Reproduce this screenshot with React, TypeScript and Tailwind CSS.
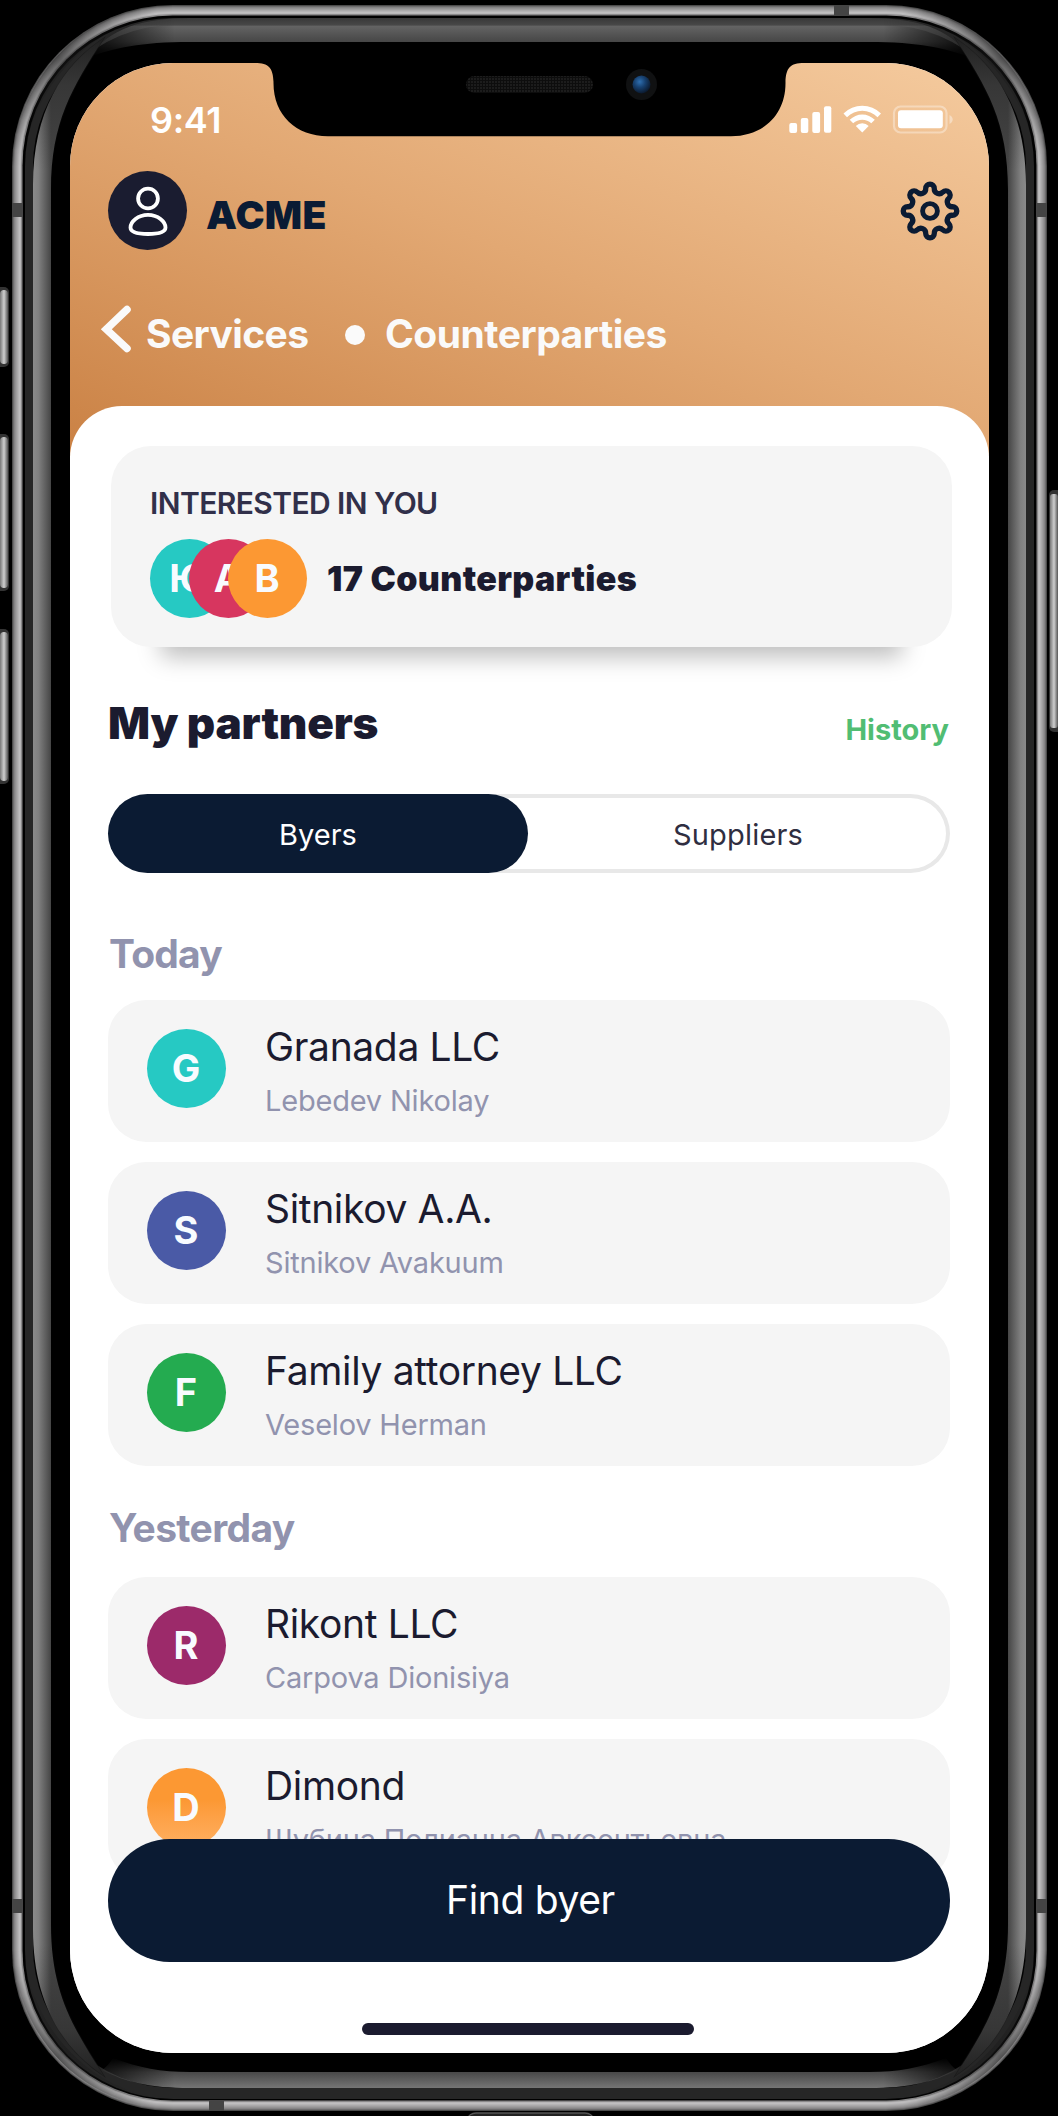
type Partner = { letter: string; color: string; name: string; person: string };

const today: Partner[] = [
  { letter: "G", color: "bg-[#26c9c3]", name: "Granada LLC", person: "Lebedev Nikolay" },
  { letter: "S", color: "bg-[#4a5aa6]", name: "Sitnikov A.A.", person: "Sitnikov Avakuum" },
  { letter: "F", color: "bg-[#24ab50]", name: "Family attorney LLC", person: "Veselov Herman" },
];

const yesterday: Partner[] = [
  { letter: "R", color: "bg-[#9c2a6a]", name: "Rikont LLC", person: "Carpova Dionisiya" },
  { letter: "D", color: "bg-linear-to-b from-[#fc9833] from-40% to-[#ffb060]", name: "Dimond", person: "Шубина Полианна Авксентьевна" },
];

// Metal edge: concentric strokes from the outer rim inwards.
const rim = ["#4c4c4c", "#6e6d6e", "#858485", "#939293", "#9f9e9f", "#aaa9aa", "#b5b4b5", "#bfbebf", "#b8b7b8", "#8a898a"];

function SideBand({ transform }: { transform?: string }) {
  return (
    <g transform={transform}>
      <path d="M33 1059 V185 C33 112 62 66 104 38 C72 88 51 122 51 190 V1059 Z" fill="url(#side)" />
      <path d="M32 190 V185 C32 112 61 65 106 36 C73 88 52 122 52 190 Z" fill="url(#tip)" />
      <path d="M12 175 C13 80 80 8 172 5 L172 16 C95 18 27 85 22 175 Z" fill="url(#cornerShade)" />
    </g>
  );
}

function Device() {
  return (
    <svg className="absolute inset-0" width="1058" height="2116" viewBox="0 0 1058 2116" fill="none">
      <defs>
        <linearGradient id="side" gradientUnits="userSpaceOnUse" x1="33" y1="0" x2="51" y2="0">
          <stop stopColor="#8a8a8a" /><stop offset=".3" stopColor="#808080" /><stop offset="1" stopColor="#454545" />
        </linearGradient>
        <linearGradient id="tip" gradientUnits="userSpaceOnUse" x1="0" y1="38" x2="0" y2="170">
          <stop stopColor="#151515" stopOpacity=".75" /><stop offset=".35" stopColor="#151515" stopOpacity=".3" /><stop offset="1" stopColor="#151515" stopOpacity="0" />
        </linearGradient>
        <linearGradient id="top" gradientUnits="userSpaceOnUse" x1="0" y1="18" x2="0" y2="58">
          <stop stopColor="#383838" /><stop offset=".18" stopColor="#484848" /><stop offset=".2" stopColor="#646464" /><stop offset=".6" stopColor="#464646" /><stop offset="1" stopColor="#000" />
        </linearGradient>
        <linearGradient id="bottom" gradientUnits="userSpaceOnUse" x1="0" y1="2058" x2="0" y2="2088">
          <stop stopColor="#000" /><stop offset=".47" stopColor="#484848" /><stop offset="1" stopColor="#757575" />
        </linearGradient>
        <linearGradient id="ends" gradientUnits="userSpaceOnUse" x1="86" y1="0" x2="972" y2="0">
          <stop stopColor="#222" /><stop offset=".1" stopColor="#fff" /><stop offset=".9" stopColor="#fff" /><stop offset="1" stopColor="#222" />
        </linearGradient>
        <mask id="bandEnds" maskUnits="userSpaceOnUse" x="0" y="0" width="1058" height="2116">
          <rect width="1058" height="2116" fill="url(#ends)" />
        </mask>
        <linearGradient id="cornerShade" gradientUnits="userSpaceOnUse" x1="12" y1="150" x2="150" y2="8">
          <stop stopColor="#1c1c1c" stopOpacity="0" /><stop offset=".5" stopColor="#1c1c1c" stopOpacity=".55" /><stop offset="1" stopColor="#1c1c1c" stopOpacity="0" />
        </linearGradient>
        <linearGradient id="key" x1="0" y1="0" x2="1" y2="0">
          <stop stopColor="#777" /><stop offset=".5" stopColor="#cfcfcf" /><stop offset="1" stopColor="#555" />
        </linearGradient>
      </defs>
      <rect width="1058" height="2116" fill="#000" />
      {[[287, 80], [434, 157], [629, 155]].map(([y, h]) => (
        <g key={y}>
          <rect x="-6" y={y} width="15" height={h} rx="5" fill="#333" />
          <rect x="0" y={y + 3} width="8" height={h - 6} rx="4" fill="url(#key)" />
        </g>
      ))}
      <rect x="1049" y="490" width="14" height="242" rx="5" fill="#333" />
      <rect x="1050" y="494" width="8" height="234" rx="3" fill="url(#key)" />
      {rim.map((c, i) => (
        <rect key={i} x={12 + i} y={5 + i} width={1035 - 2 * i} height={2106 - 2 * i} rx={161 - i} fill={c} />
      ))}
      <rect x="22.500" y="15.500" width="1014" height="2085" rx="150" fill="#000" />
      <rect x="25" y="18" width="1009" height="2081" rx="148" fill="#262626" />
      <rect x="33" y="25" width="993" height="2063" rx="141" fill="#000" />
      <g mask="url(#bandEnds)">
        <path d="M190 18 H869 C929 18 951 34 973 58 C944 48 919 42 869 42 H190 C140 42 115 48 86 58 C108 34 130 18 190 18 Z" fill="url(#top)" />
        <path d="M190 2088 H869 C909 2088 934 2082 957 2070 C951 2066 949 2062 946 2058 C919 2068 899 2072 869 2072 H190 C160 2072 140 2068 113 2058 C110 2062 108 2066 102 2070 C125 2082 150 2088 190 2088 Z" fill="url(#bottom)" />
      </g>
      <SideBand />
      <SideBand transform="matrix(-1 0 0 1 1059 0)" />
      <SideBand transform="matrix(1 0 0 -1 0 2114)" />
      <SideBand transform="matrix(-1 0 0 -1 1059 2114)" />
      <path d="M12 203h10v14H12zM1037 203h10v14h-10zM12 1899h10v14H12zM1037 1899h10v14h-10zM834 5h15v11h-15zM209 2101h15v10h-15z" fill="#444" />
      <rect x="468" y="2113" width="125" height="12" rx="8" fill="#222" stroke="#555" strokeWidth="1.500" />
    </svg>
  );
}

function Notch() {
  return (
    <svg className="absolute left-[180px] top-0" width="560" height="75" viewBox="250 63 560 75">
      <defs>
        <pattern id="mesh" width="3" height="3" patternUnits="userSpaceOnUse">
          <rect width="3" height="3" fill="#0d0d0d" /><rect width="2" height="2" fill="#1c1c1c" />
        </pattern>
        <radialGradient id="lens" cx=".4" cy=".35" r=".7">
          <stop stopColor="#2f6fb0" /><stop offset=".45" stopColor="#17406f" /><stop offset="1" stopColor="#0a1526" />
        </radialGradient>
      </defs>
      <path d="M255 62 V63 C269 63 273 68 273.500 82 C273 115 296 136.300 328 136.300 H731 C763 136.300 786 115 785.500 82 C786 68 790 63 804 63 V62 Z" fill="#000" />
      <rect x="466" y="76" width="127" height="17" rx="8.500" fill="url(#mesh)" />
      <circle cx="641.500" cy="84.500" r="15.500" fill="#101112" />
      <circle cx="641.500" cy="84.500" r="9" fill="url(#lens)" />
    </svg>
  );
}

function StatusIcons() {
  return (
    <svg width="166" height="30" viewBox="788 105 166 30" fill="#fff">
      <rect x="789.300" y="123" width="7.800" height="10" rx="2" />
      <rect x="800.800" y="118" width="7.500" height="15" rx="2" />
      <rect x="812.300" y="112" width="7.800" height="21" rx="2" />
      <rect x="824" y="106.200" width="7.300" height="26.600" rx="2" />
      <path d="M843.500 113.500 A26.500 26.500 0 0 1 881 113.500 L877.500 117.200 A21.500 21.500 0 0 0 847 117.200 Z" />
      <path d="M849.700 119.800 A17.800 17.800 0 0 1 874.800 119.800 L871.300 123.300 A13 13 0 0 0 853.200 123.300 Z" />
      <path d="M855.800 126 A9.200 9.200 0 0 1 868.700 126 L862.250 132.500 Z" />
      <rect x="894" y="106.500" width="52.500" height="26" rx="6.500" fill="none" stroke="#fff" strokeOpacity=".35" strokeWidth="2.200" />
      <rect x="898" y="110.200" width="44.800" height="18" rx="3" />
      <path d="M949.500 115 C953.800 117 953.800 122 949.500 124 Z" fillOpacity=".4" />
    </svg>
  );
}

function Gear() {
  const at = (deg: number, r: number) => {
    const a = (deg * Math.PI) / 180;
    return `${(30 + r * Math.sin(a)).toFixed(2)} ${(30 - r * Math.cos(a)).toFixed(2)}`;
  };
  let d = `M${at(-10.800, 22.900)}`;
  for (let k = 0; k < 8; k++) {
    d += `A4.200 4.200 0 0 1 ${at(k * 45 + 10.800, 22.900)}A4.900 4.900 0 0 0 ${at(k * 45 + 34.200, 22.900)}`;
  }
  return (
    <svg width="60" height="60" viewBox="0 0 60 60" fill="none" stroke="#0b1b33" strokeWidth="5.300" strokeLinejoin="round">
      <path d={d + "Z"} />
      <circle cx="30" cy="30" r="7.400" strokeWidth="4.900" />
    </svg>
  );
}

function Avatar({ letter, color }: { letter: string; color: string }) {
  return (
    <div className={`flex size-[79px] shrink-0 items-center justify-center rounded-full pr-px pb-px text-[38px] leading-none font-bold text-[#f8fbff] ${color}`}>
      {letter}
    </div>
  );
}

function PartnerCard({ letter, color, name, person }: Partner) {
  return (
    <div className="flex h-[142px] shrink-0 gap-[39px] rounded-[38px] bg-[#f5f5f5] pt-[29px] pl-[39px]">
      <Avatar letter={letter} color={color} />
      <div className="flex flex-col whitespace-nowrap">
        <div className="-mt-[2px] text-[39px] leading-[39px] tracking-[-0.35px] text-[#1b1b2f]">{name}</div>
        <div className="mt-[20px] text-[29px] leading-[29px] tracking-[-0.2px] text-[#9193ae]">{person}</div>
      </div>
    </div>
  );
}

export default function App() {
  return (
    <div className="relative h-[2116px] w-[1058px] overflow-hidden bg-black pt-[63px] pl-[70px] font-['Inter',sans-serif]">
      <Device />
      <div className="relative flex h-[1990px] w-[919px] flex-col overflow-hidden rounded-[103px] bg-white">
        <header className="h-[393px] shrink-0 bg-[linear-gradient(22deg,#ca8144_0%,#e2a873_50%,#f5cb9f_100%)]">
          <div className="flex h-[108px] items-start justify-between pt-[39px] pr-[35px] pl-[80px]">
            <span className="text-[36px] leading-[36px] font-semibold tracking-[-0.4px] text-white">9:41</span>
            <div className="mt-[3px]"><StatusIcons /></div>
          </div>
          <div className="flex h-[79px] items-center pr-[29px] pl-[38px]">
            <div className="flex size-[79px] items-center justify-center rounded-full bg-[#1a1c30]">
              <svg width="42" height="52" viewBox="0 0 42 52" fill="none" stroke="#fff" strokeWidth="3.800">
                <circle cx="21" cy="13.500" r="9.900" />
                <path d="M21 29.800 C31 29.800 38.500 36.500 38.500 42.500 C38.500 48 30 49 21 49 C12 49 3.500 48 3.500 42.500 C3.500 36.500 11 29.800 21 29.800 Z" />
              </svg>
            </div>
            <span className="mt-[8px] ml-[19px] text-[39px] leading-[39px] font-black tracking-[0.3px] text-[#0a1b34]">ACME</span>
            <div className="ml-auto"><Gear /></div>
          </div>
          <div className="mt-[54px] flex h-[50px] items-center pl-[30px] text-[39px] leading-[39px] font-bold text-[#fafafa]">
            <svg width="34" height="50" viewBox="0 0 34 50" fill="none" stroke="#fafafa" strokeWidth="7.500" strokeLinecap="round">
              <path d="M27 5.500 L6.300 25.300 L27 44.500" />
            </svg>
            <span className="mt-[8px] ml-[12px] w-[163px] tracking-[-0.6px]">Services</span>
            <span className="mt-[12px] ml-[36px] size-5 rounded-full bg-[#fafafa]" />
            <span className="mt-[8px] ml-[20px] tracking-[-0.5px]">Counterparties</span>
          </div>
        </header>

        <main className="relative -mt-[50px] flex grow flex-col rounded-t-[52px] bg-white pr-[39px] pl-[38px]">
          <section className="mt-[40px] mr-[-2px] ml-[3px] h-[201px] rounded-[40px] bg-[#f5f5f5] pt-[42px] pl-[39px] shadow-[0_60px_22px_-50px_rgba(0,0,0,0.26)]">
            <div className="text-[30px] leading-[30px] font-semibold tracking-[-0.58px] text-[#31304a]">INTERESTED IN YOU</div>
            <div className="mt-[21px] flex items-center">
              <Avatar letter="Ю" color="bg-[#26c9c3]" />
              <div className="-ml-10"><Avatar letter="А" color="bg-[#d7365f]" /></div>
              <div className="-ml-10"><Avatar letter="В" color="bg-[#fc9833]" /></div>
              <span className="ml-[20px] text-[34px] leading-[34px] font-black tracking-[0.35px] text-[#1b1b2f]">17 Counterparties</span>
            </div>
          </section>

          <div className="mt-[54px] flex h-[44px] items-start justify-between">
            <h1 className="text-[44px] leading-[44px] font-black tracking-[-0.2px] text-[#1b1b2f]">My partners</h1>
            <span className="mt-[14px] pr-px text-[29px] leading-[29px] font-bold text-[#51bd73]">History</span>
          </div>

          <div className="mt-[49px] flex h-[79px] shrink-0 rounded-full text-[29px] leading-[29px] shadow-[inset_0_0_0_4px_#e8e8e8]">
            <div className="flex w-[420px] items-center justify-center rounded-full bg-[#0b1b33] pt-[2px] text-white">Byers</div>
            <div className="flex grow items-center justify-center pt-[2px] pr-[2px] tracking-[0.2px] text-[#2f2e41]">Suppliers</div>
          </div>

          <h2 className="mt-[61px] pl-px text-[39px] leading-[39px] font-bold tracking-[-0.8px] text-[#9193ae]">Today</h2>
          <div className="mt-[27px] flex flex-col gap-5">
            {today.map((p) => <PartnerCard key={p.name} {...p} />)}
          </div>

          <h2 className="mt-[42px] pl-px text-[39px] leading-[39px] font-bold tracking-[-0.65px] text-[#9193ae]">Yesterday</h2>
          <div className="mt-[30px] flex h-[304px] flex-col gap-5">
            {yesterday.map((p) => <PartnerCard key={p.name} {...p} />)}
          </div>

          <button className="relative -mt-[42px] flex h-[123px] shrink-0 items-center justify-center rounded-full bg-[#0b1b33] pb-[2px] pl-[3px] text-[39px] leading-[39px] tracking-[-0.35px] text-white">
            Find byer
          </button>
          <div className="mt-[61px] ml-[254px] h-3 w-[332px] shrink-0 rounded-full bg-[#1b1b2f]" />
        </main>
        <Notch />
      </div>
    </div>
  );
}
